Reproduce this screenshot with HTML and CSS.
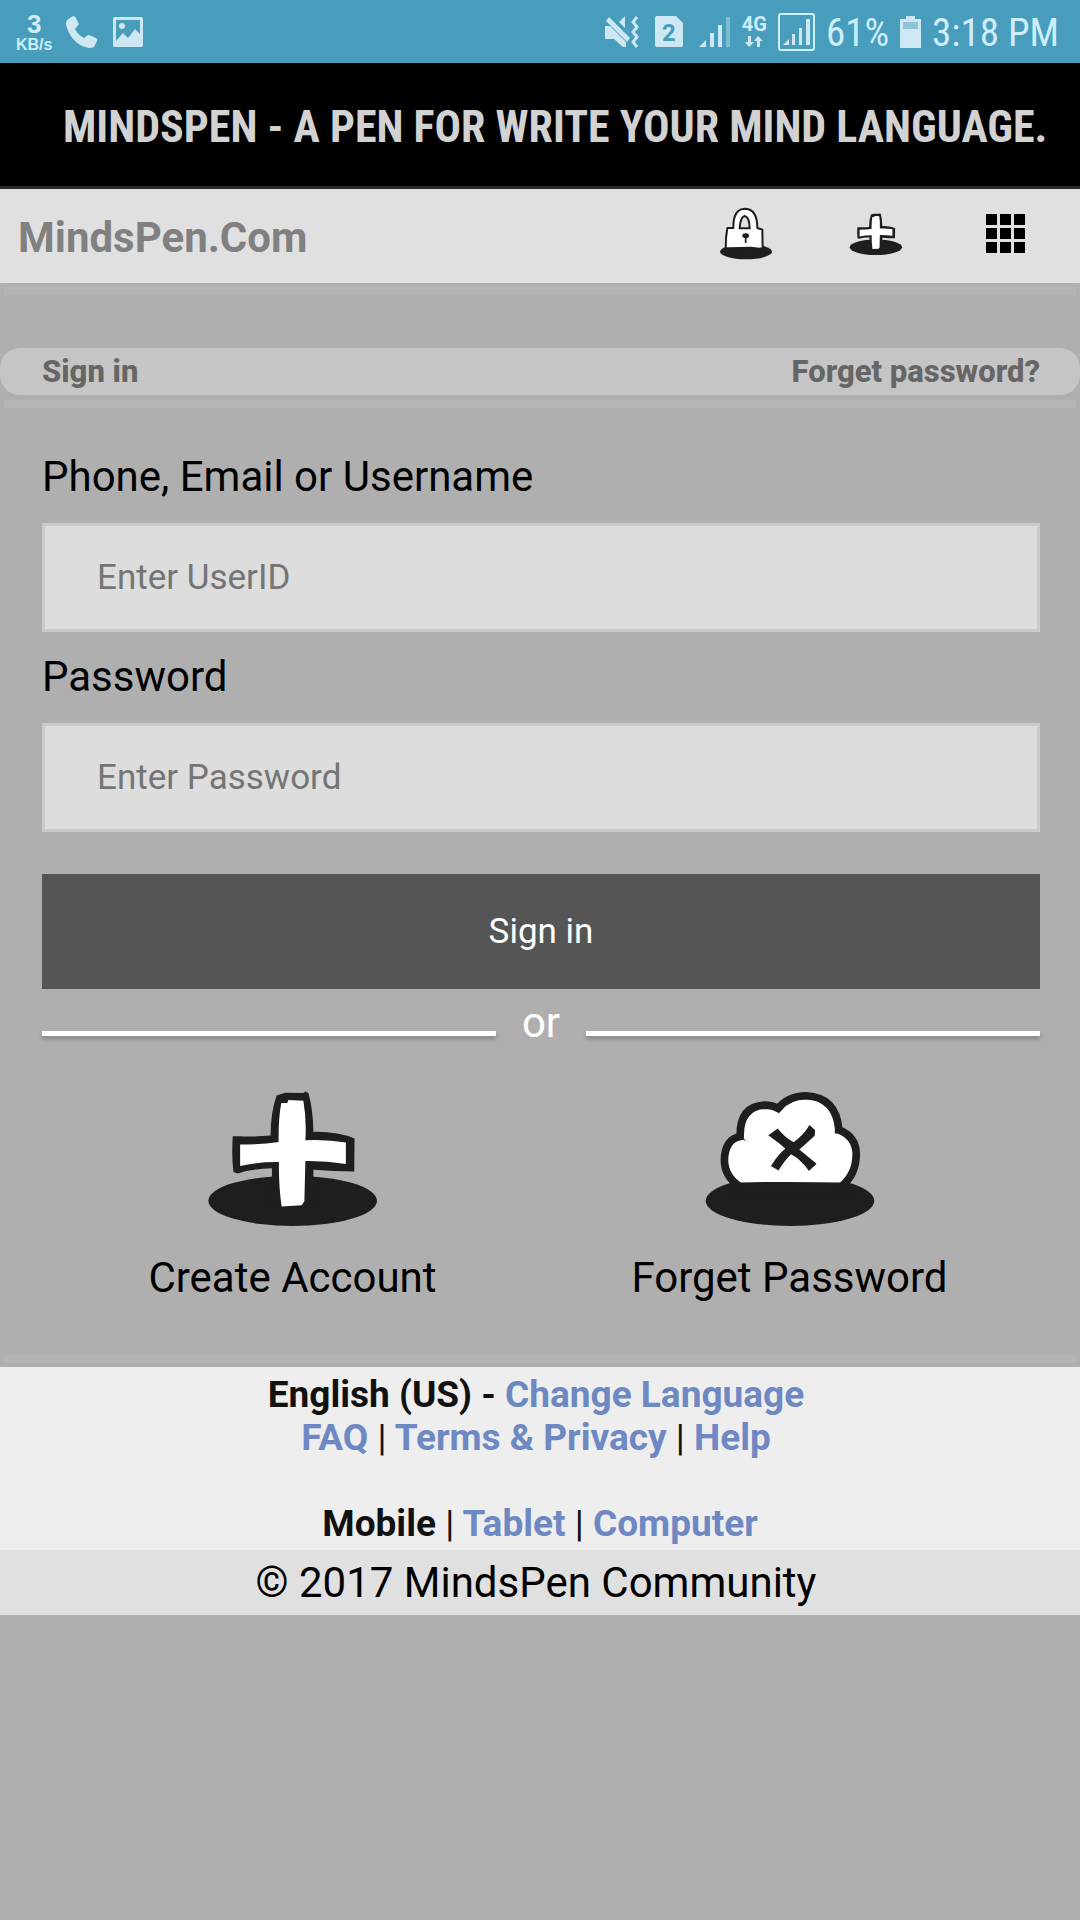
FILE: index.html
```html
<!DOCTYPE html>
<html lang="en">
<head>
<meta charset="utf-8">
<meta name="viewport" content="width=device-width, initial-scale=1">
<title>MindsPen - Sign in</title>
<link rel="stylesheet" href="styles.css">
</head>
<body>
<div class="status">
  <div class="status-group status-left">
    <div class="speed"><span class="speed-value">3</span><span class="speed-unit">KB/s</span></div>
    <svg class="icon" width="32" height="32" viewBox="0 0 32 32" aria-hidden="true"><path d="M1 4 7 0q2 0 3 2l3 6-4 5q3 6 9 9l4-3q2 0 8 3 2 1 1 3l-3 6q-2 1-5 1Q7 29 1 12-1 7 1 4z"/></svg>
    <svg class="icon" width="32" height="32" viewBox="0 0 32 32" aria-hidden="true"><path fill-rule="evenodd" d="M3 1h26q2 0 2 2v26q0 2-2 2H3q-2 0-2-2V3q0-2 2-2zm1 3v21l7-8 5 5 7-9 5 5V4z"/><circle cx="10" cy="10" r="3"/></svg>
  </div>
  <div class="status-group status-right">
    <svg class="icon spaced" width="34" height="32" viewBox="0 0 34 32" aria-hidden="true"><path d="M0 10h5l16 16v5h-3l-9-8H0zM20 0v12l-6-6zM4 1l21 21-3 4L1 5z"/><path class="wave" d="M32 1l-4 5 4 5-4 5 4 5-4 5 4 5"/></svg>
    <svg class="icon spaced" width="28" height="32" viewBox="0 0 28 32" aria-hidden="true"><path d="M2 0h19l7 7v22q0 2-2 2H2q-2 0-2-2V2q0-2 2-2z"/><text class="sim-number" x="14" y="25" text-anchor="middle">2</text></svg>
    <svg class="icon" width="32" height="32" viewBox="0 0 32 32" aria-hidden="true"><path d="M0 31h7v-7zM11 17h4v14h-4zM19 9h4v22h-4z"/><path class="faint" d="M27 1h4v30h-4z"/></svg>
    <div class="network"><span>4G</span><svg class="icon" width="18" height="11" viewBox="0 0 18 11" aria-hidden="true"><path d="M3 0h3v6h3l-5 5-4-5h3zM12 11h3V5h3l-5-5-4 5h3z"/></svg></div>
    <svg class="icon" width="37" height="38" viewBox="0 0 37 38" aria-hidden="true"><rect class="frame" x="1" y="1" width="35" height="36" rx="2"/><path d="M5 32h6v-6zM14 21h3v11h-3zM21 15h3v17h-3zM28 6h4v26h-4z"/></svg>
    <span class="status-text">61%</span>
    <svg class="icon battery" width="21" height="32" viewBox="0 0 21 32" aria-hidden="true"><path d="M6 0h9v3h6v29H0V3h6z"/><path class="drained" d="M3 6h15v7H3z"/></svg>
    <span class="status-text">3:18 PM</span>
  </div>
</div>

<div class="banner">MINDSPEN - A PEN FOR WRITE YOUR MIND LANGUAGE.</div>

<header class="header">
  <a class="brand" href="#">MindsPen.Com</a>
  <nav class="nav">
    <a class="nav-link" href="#" aria-label="Sign in">
      <svg width="54" height="54" viewBox="0 0 162 162"><ellipse class="ink" cx="81" cy="134" rx="78" ry="23"/><path class="shape" stroke-width="6" d="M43 63Q42 6 77 5q38 0 38 58l15 5 1 56-9 1-28-3-65 2-9-1q0-33 5-60z"/><path class="hole" d="M62 64q2-34 15-37 14 2 15 37z"/><ellipse class="ink" cx="80" cy="86" rx="10" ry="7"/><path class="key" d="M80 88v20"/></svg>
    </a>
    <a class="nav-link" href="#" aria-label="Create account">
      <svg width="54" height="44" viewBox="50 60 520 410"><use href="#plus"/></svg>
    </a>
    <button class="nav-link" type="button" aria-label="Menu">
      <svg width="40" height="40" viewBox="0 0 40 40"><path d="M0 0h11v11H0zM14 0h11v11H14zM28 0h11v11H28zM0 14h11v11H0zM14 14h11v11H14zM28 14h11v11H28zM0 28h11v11H0zM14 28h11v11H14zM28 28h11v11H28z"/></svg>
    </button>
  </nav>
</header>

<main class="main">
  <hr class="rule">
  <div class="crumbs">
    <a href="#">Sign in</a>
    <a href="#">Forget password?</a>
  </div>
  <hr class="rule">
  <form class="form">
    <label for="user">Phone, Email or Username</label>
    <input id="user" type="text" placeholder="Enter UserID">
    <label for="pass">Password</label>
    <input id="pass" type="password" placeholder="Enter Password">
    <button class="submit" type="submit">Sign in</button>
  </form>
  <div class="divider"><span>or</span></div>
  <div class="options">
    <a class="option" href="#">
      <svg width="174" height="138" viewBox="50 60 520 410" aria-hidden="true">
        <g id="plus">
          <ellipse class="ink" cx="309" cy="393" rx="252" ry="75"/>
          <path class="ink" d="M261 78l26-8 54 1 6-5 9 5q14 50 15 116 70-2 123 20l-1 98q-62 0-122-5l-1 100H247V296q-60 2-103 15l-12-4q-6-50-2-107l18 0q45 2 95-2 0-70 18-120z"/>
          <path class="paper" d="M275 101l18 0 3-9 45 2q10 56 6 118 66-3 121 7v64q-60-10-121-9l-3 120-8 12-60 4q-9-60-8-133-60-1-116 12V225q60 0 115-8-1-70 8-116z"/>
        </g>
      </svg>
      <span>Create Account</span>
    </a>
    <a class="option" href="#">
      <svg width="174" height="138" viewBox="40 60 520 410" aria-hidden="true">
        <ellipse class="ink" cx="300" cy="393" rx="252" ry="75"/>
        <path class="shape" stroke-width="23" d="M150 350Q104 320 104 270q2-60 47-69-2-90 74-94 23 0 39 10 32-38 84-38 90 4 98 102 51 20 52 72 0 60-44 97-160-4-304 0z"/>
        <path class="ink" d="M118 344q180-5 362 0l-10 40H130zM137 207q14-2 32 7l-22-24zM258 118l8 14 14-16zM434 180v12q14-2 26 4z"/>
        <path class="ink cross" d="M240 197l23-16q20 26 48 40 30-20 48-50l13 12-1 14-48 43 52 42-18 17q-24-34-54-49-20 18-38 48l-18-10q22-34 44-51-23-20-51-40z"/>
      </svg>
      <span>Forget Password</span>
    </a>
  </div>
  <hr class="rule">
</main>

<footer>
  <div class="links">
    <p class="links-row">English (US) - <a href="#">Change Language</a></p>
    <p class="links-row"><a href="#">FAQ</a> <span class="bar">|</span> <a href="#">Terms &amp; Privacy</a> <span class="bar">|</span> <a href="#">Help</a></p>
    <p class="devices">Mobile <span class="bar">|</span> <a href="#">Tablet</a> <span class="bar">|</span> <a href="#">Computer</a></p>
  </div>
  <p class="copyright">© 2017 MindsPen Community</p>
</footer>
</body>
</html>
```

FILE: styles.css
```css
* { box-sizing: border-box; }

body {
  margin: 0;
  background: #afafaf;
  color: #000;
  font-family: Roboto, "Liberation Sans", sans-serif;
  font-size: 42px;
  line-height: 50px;
}

a { color: inherit; text-decoration: none; }
p { margin: 0; }
svg { display: block; flex: none; }

/* Phone status bar */
.status {
  display: flex;
  justify-content: space-between;
  height: 63px;
  padding: 0 21px 0 16px;
  background: #489dbd;
  color: #cdeefa;
}
.status-group { display: flex; align-items: center; }
.status-left { gap: 14px; }
.status-right { gap: 11px; }
.icon { fill: #cde8f3; }
.spaced { margin-right: 5px; }
.speed {
  display: flex;
  flex-direction: column;
  align-items: center;
  font-family: "Liberation Sans", sans-serif;
  font-weight: bold;
}
.speed-value { font-size: 26px; line-height: 26px; }
.speed-unit { font-size: 16px; line-height: 16px; }
.wave { fill: none; stroke: #cde8f3; stroke-width: 3; }
.sim-number { font-size: 24px; font-weight: bold; fill: #489dbd; }
.faint { opacity: 0.4; }
.network {
  display: flex;
  flex-direction: column;
  align-items: center;
  gap: 3px;
  font-size: 20px;
  line-height: 17px;
  font-weight: bold;
}
.frame { fill: none; stroke: #cdeefa; stroke-width: 2; }
.drained { fill: #8fc3d8; }
.status-text {
  padding-top: 3px;
  font-family: "Roboto Condensed", "Liberation Sans Narrow", Roboto, sans-serif;
  font-size: 39px;
}

.banner {
  padding: 39px 20px 33px 63px;
  border-bottom: 3px solid #2a2a2a;
  background: #000;
  color: #d2d2d2;
  font-family: "Roboto Condensed", "Liberation Sans Narrow", Roboto, sans-serif;
  font-size: 44px;
  line-height: 51px;
  font-weight: bold;
  white-space: nowrap;
}

/* Site header */
.header {
  display: flex;
  justify-content: space-between;
  padding: 0 9px 0 18px;
  background: #e0e0e0;
}
.brand {
  padding: 24px 0 20px;
  color: #808080;
  font-weight: bold;
}
.nav { display: flex; padding-bottom: 5px; }
.nav-link {
  display: flex;
  align-items: center;
  justify-content: center;
  width: 130px;
  padding: 0;
  border: 0;
  background: none;
}

.ink { fill: #201d1e; }
.paper { fill: #fff; }
.shape { fill: #fff; stroke: #201d1e; stroke-linejoin: round; }
.cross { stroke: #201d1e; stroke-width: 6; }
.hole { fill: #e0e0e0; stroke: #201d1e; stroke-width: 6; }
.key { stroke: #201d1e; stroke-width: 5; }

/* Sign-in area */
.main { padding-top: 4px; }
.rule {
  height: 8px;
  margin: 0 4px;
  border: 0;
  background: #b4b4b4;
}
.crumbs {
  display: flex;
  justify-content: space-between;
  margin: 53px 0 5px;
  padding: 0 40px 0 42px;
  border-radius: 20px;
  background: #c5c5c5;
  color: #666;
  font-size: 31px;
  line-height: 47px;
  font-weight: 800;
}
.form {
  display: flex;
  flex-direction: column;
  padding: 44px 40px 0 42px;
}
.form label { margin-bottom: 21px; }
.form input {
  width: 100%;
  height: 109px;
  margin-bottom: 20px;
  padding: 0 52px;
  border: 3px solid #cbcbcb;
  border-radius: 0;
  background: #ddd;
  color: #000;
  font: inherit;
  font-size: 35px;
}
.form input::placeholder { color: #757575; opacity: 1; }
.submit {
  margin-top: 22px;
  padding: 32px;
  border: 0;
  background: #555;
  color: #fff;
  font: inherit;
  font-size: 35px;
  line-height: 51px;
}
.divider {
  display: flex;
  gap: 26px;
  padding: 9px 40px 0 42px;
  color: #fff;
}
.divider::before,
.divider::after {
  content: "";
  flex: 1;
  height: 5px;
  margin-top: 33px;
  background: #fff;
  box-shadow: 0 3px 4px rgba(0, 0, 0, 0.25);
}
.options {
  display: grid;
  grid-template-columns: 1fr 1fr;
  padding: 41px 42px 52px 44px;
}
.option {
  display: flex;
  flex-direction: column;
  align-items: center;
  gap: 26px;
}

/* Footer */
.links {
  margin-top: 4px;
  padding: 6px 0 5px;
  background: #eee;
  color: #111;
  font-size: 37px;
  line-height: 43px;
  font-weight: bold;
  text-align: center;
}
.links a { color: #6d88c2; }
.links-row { padding-right: 8px; }
.bar { font-weight: normal; }
.devices { margin-top: 43px; }
.copyright {
  padding: 8px 8px 7px 0;
  background: #e0e0e0;
  text-align: center;
}
```
